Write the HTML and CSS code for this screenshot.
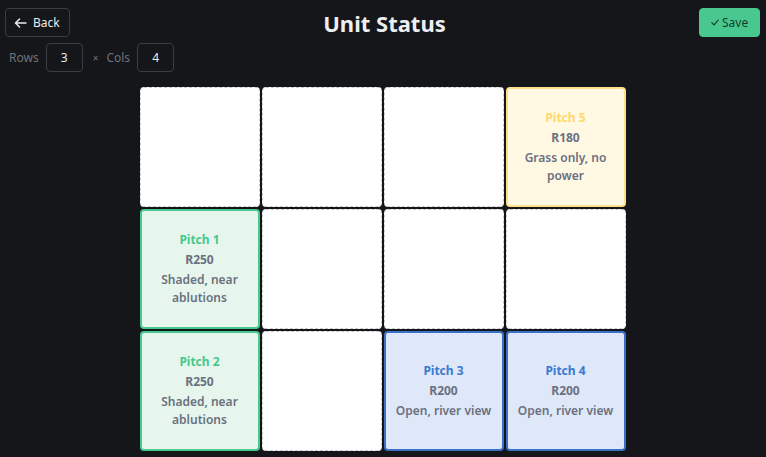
FILE: index.html
```html
<!DOCTYPE html>
<html>
<head>
<meta charset="utf-8">
<link rel="stylesheet" href="styles.css">
</head>
<body>
<div class="page">
  <header class="topbar">
    <button class="btn btn-back">
      <svg class="ico" width="13" height="10" viewBox="0 0 13 10"><path d="M12 5H1.5M5.5 1L1.5 5l4 4" fill="none" stroke="currentColor" stroke-width="1.5" stroke-linecap="round" stroke-linejoin="round"/></svg>
      <span>Back</span>
    </button>
    <h1 class="title">Unit Status</h1>
    <button class="btn btn-save">
      <svg class="ico" width="8" height="7" viewBox="0 0 8 7"><path d="M0.8 3.6L3 5.8L7.2 1.2" fill="none" stroke="currentColor" stroke-width="1.1" stroke-linecap="round" stroke-linejoin="round"/></svg>
      <span>Save</span>
    </button>
  </header>
  <div class="controls">
    <label class="lbl">Rows</label>
    <div class="num">3</div>
    <span class="times">×</span>
    <label class="lbl">Cols</label>
    <div class="num">4</div>
  </div>
  <div class="grid">
    <div class="cell empty"></div>
    <div class="cell empty"></div>
    <div class="cell empty"></div>
    <div class="cell pitch yellow"><div class="name">Pitch 5</div><div class="price">R180</div><div class="desc">Grass only, no power</div></div>
    <div class="cell pitch green"><div class="name">Pitch 1</div><div class="price">R250</div><div class="desc">Shaded, near ablutions</div></div>
    <div class="cell empty"></div>
    <div class="cell empty"></div>
    <div class="cell empty"></div>
    <div class="cell pitch green"><div class="name">Pitch 2</div><div class="price">R250</div><div class="desc">Shaded, near ablutions</div></div>
    <div class="cell empty"></div>
    <div class="cell pitch blue"><div class="name">Pitch 3</div><div class="price">R200</div><div class="desc">Open, river view</div></div>
    <div class="cell pitch blue"><div class="name">Pitch 4</div><div class="price">R200</div><div class="desc">Open, river view</div></div>
  </div>
</div>
</body>
</html>
```
FILE: styles.css
```css
* { box-sizing: border-box; }
html, body { margin: 0; padding: 0; }
body {
  background: #15161a;
  font-family: "Noto Sans", "Open Sans", sans-serif;
  color: #e8e8ea;
  overflow: hidden;
}
.page {
  padding: 8px 6px 0 5px;
  display: flex;
  flex-direction: column;
}
.topbar {
  display: flex;
  justify-content: space-between;
  align-items: center;
  height: 29px;
}
.btn {
  height: 29px;
  display: flex;
  align-items: center;
  gap: 6px;
  border-radius: 4px;
  font-family: inherit;
  font-size: 12px;
  cursor: pointer;
}
.btn-back {
  width: 65px;
  padding: 0 0 0 8px;
  background: transparent;
  border: 1px solid #3b3c41;
  color: #ececee;
}
.btn-save {
  width: 61px;
  padding: 0 0 0 11px;
  gap: 3px;
  background: #48c78e;
  border: 1px solid #48c78e;
  color: rgba(0, 0, 0, 0.72);
}
.ico { flex: none; }
.title {
  margin: 0;
  font-size: 22px;
  font-weight: 700;
  color: #edeef2;
  letter-spacing: 0;
}
.controls {
  margin-top: 6px;
  padding-left: 4px;
  display: flex;
  align-items: center;
  height: 29px;
}
.lbl {
  font-size: 12px;
  color: #6f7278;
  margin-right: 7px;
}
.num {
  width: 37px;
  height: 29px;
  border: 1px solid #3b3c41;
  border-radius: 4px;
  display: flex;
  align-items: center;
  justify-content: center;
  font-size: 12px;
  color: #ececee;
}
.times {
  font-size: 10px;
  color: #6f7278;
  margin: 0 8px 0 10px;
}
.grid {
  margin: 15px auto 0;
  display: grid;
  grid-template-columns: repeat(4, 120px);
  grid-auto-rows: 120px;
  gap: 2px;
}
.cell {
  border-radius: 4px;
  background: #fff;
}
.empty {
  border: 1px dashed #c9c9cc;
}
.pitch {
  border: 2px solid;
  display: flex;
  flex-direction: column;
  align-items: center;
  justify-content: center;
  text-align: center;
  padding: 0 10px;
  font-size: 12px;
  font-weight: 600;
  line-height: 18px;
  color: #6b7080;
}
.pitch .name { font-weight: 700; margin-bottom: 2px; }
.pitch .price { font-weight: 700; margin-bottom: 2px; }
.yellow { background: #fff8e3; border-color: #ffe08a; }
.yellow .name { color: #ffd96a; }
.green { background: #e6f6ec; border-color: #48c78e; }
.green .name { color: #48c78e; }
.blue { background: #dfe8f8; border-color: #3a70c6; }
.blue .name { color: #3b7ad2; }
```
